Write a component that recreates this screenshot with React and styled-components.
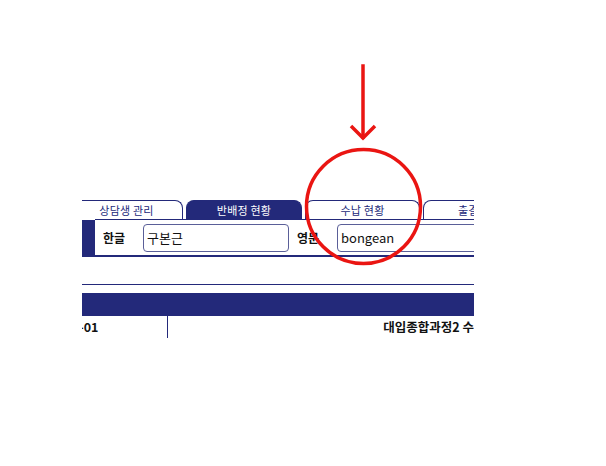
import styled, { createGlobalStyle } from 'styled-components';

const NAVY = '#23297a';
const RED = '#ea1512';

const GlobalStyle = createGlobalStyle`
  html, body {
    margin: 0;
    background: #fff;
  }
  body {
    font-family: "Noto Sans CJK KR", "Noto Sans", sans-serif;
  }
`;

const Page = styled.div`
  position: relative;
  width: 606px;
  height: 466px;
  padding: 199px 0 0 82px;
  box-sizing: border-box;
`;

const Frame = styled.div`
  width: 392px;
  overflow: hidden;
`;

const TabBar = styled.div`
  display: flex;
  align-items: flex-end;
  gap: 3px;
  height: 20px;
  margin-left: -12px;
`;

const Tab = styled.div`
  flex: 0 0 ${p => p.$w}px;
  height: 19px;
  box-sizing: border-box;
  border: 1px solid ${NAVY};
  border-bottom: none;
  border-radius: 8px 8px 0 0;
  background: ${p => (p.$active ? NAVY : '#fff')};
  color: ${p => (p.$active ? '#fff' : NAVY)};
  font-size: 11px;
  line-height: 18px;
  text-align: center;
  letter-spacing: 0.2px;
  white-space: nowrap;
  overflow: hidden;
`;

const Panel = styled.div`
  display: flex;
  height: 38px;
`;

const Marker = styled.div`
  flex: 0 0 13px;
  background: ${NAVY};
  margin-top: 1px;
`;

const FormRow = styled.div`
  flex: 1;
  display: flex;
  align-items: center;
  border-top: 1px solid ${NAVY};
  border-bottom: 2px solid ${NAVY};
  padding-left: 8px;
`;

const Label = styled.span`
  font-size: 12px;
  font-weight: 700;
  color: #111;
  width: ${p => p.$w}px;
  flex: 0 0 auto;
`;

const Field = styled.div`
  flex: 0 0 ${p => p.$w}px;
  height: 28px;
  box-sizing: border-box;
  border: 1px solid #5a5f98;
  border-radius: 4px;
  padding-left: 3px;
  font-size: 13px;
  line-height: 26px;
  color: #111;
  margin-right: 8px;
  white-space: nowrap;
`;

const Rule = styled.div`
  margin-top: 27px;
  height: 1px;
  background: ${NAVY};
`;

const HeaderBar = styled.div`
  margin-top: 8px;
  height: 23px;
  background: ${NAVY};
`;

const DataRow = styled.div`
  display: flex;
  height: 22px;
`;

const Cell = styled.div`
  flex: ${p => (p.$w ? `0 0 ${p.$w}px` : 1)};
  border-right: ${p => (p.$line ? `1px solid ${NAVY}` : 'none')};
  font-size: 12.5px;
  font-weight: 700;
  color: #111;
  line-height: 22px;
  text-align: ${p => p.$align || 'left'};
  white-space: nowrap;
  overflow: hidden;
`;

const Clip = styled.span`
  margin-left: -3px;
`;

const Annotation = styled.svg`
  position: absolute;
  left: 0;
  top: 0;
  pointer-events: none;
`;

export default function App() {
  return (
    <>
      <GlobalStyle />
      <Page>
        <Frame>
          <TabBar>
            <Tab $w={113}>상담생 관리</Tab>
            <Tab $w={116} $active>반배정 현황</Tab>
            <Tab $w={115}>수납 현황</Tab>
            <Tab $w={114}>출결 현황</Tab>
          </TabBar>
          <Panel>
            <Marker />
            <FormRow>
              <Label $w={40}>한글</Label>
              <Field $w={146}>구본근</Field>
              <Label $w={40}>영문</Label>
              <Field $w={160}>bongean</Field>
            </FormRow>
          </Panel>
          <Rule />
          <HeaderBar />
          <DataRow>
            <Cell $w={85} $line><Clip>-01</Clip></Cell>
            <Cell $align="right">대입종합과정2 수</Cell>
          </DataRow>
        </Frame>
        <Annotation width="606" height="466" viewBox="0 0 606 466">
          <g fill="none" stroke={RED} strokeWidth="3.5" strokeLinecap="square">
            <line x1="363" y1="66" x2="363" y2="137" />
            <polyline points="351,126 363,138 375,126" strokeLinecap="butt" />
            <circle cx="363.5" cy="206.5" r="57" />
          </g>
        </Annotation>
      </Page>
    </>
  );
}
